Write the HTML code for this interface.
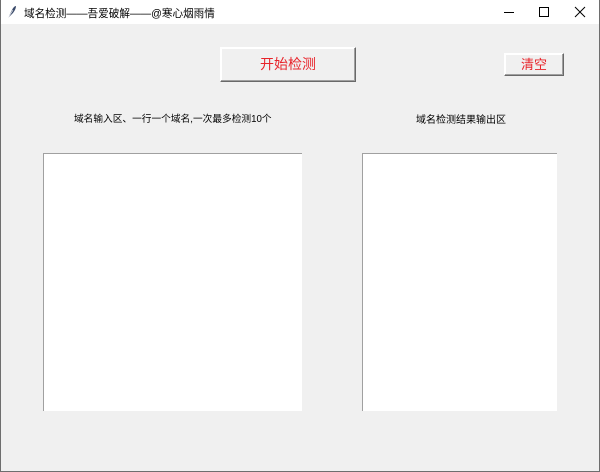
<!DOCTYPE html>
<html><head><meta charset="utf-8"><style>
*{margin:0;padding:0;box-sizing:border-box}
body{width:600px;height:472px;overflow:hidden;background:#f0f0f0;font-family:"Liberation Sans","Noto Sans CJK SC",sans-serif;position:relative}
.win{position:absolute;left:0;top:0;width:600px;height:472px;border:1px solid #6e6e6e;border-top:none}
.title{position:absolute;left:0;top:0;width:600px;height:24px;background:#fff;font-size:10.6px;color:#000}
.title span{position:absolute;left:24px;top:6px}
.btn{position:absolute;background:#f0f0f0;border:1px solid #fff;border-right-color:#696969;border-bottom-color:#696969;box-shadow:inset -1px -1px 0 #a0a0a0, inset 1px 1px 0 #fff;color:#e8232a;text-align:center}
.lbl{position:absolute;font-size:10px;color:#000}
.ta{position:absolute;background:#fff;border-top:1px solid #a0a0a0;border-left:1px solid #a0a0a0}
</style></head><body>
<div class="title">
<svg style="position:absolute;left:7px;top:5px" width="10" height="14" viewBox="0 0 10 14"><path d="M1 13 L5 5 Q7 1 9 1 Q9 4 6 8 Z" fill="#3a4a6a"/><path d="M1 13 L6 5" stroke="#fff" stroke-width="0.6"/></svg>
<span>域名检测——吾爱破解——@寒心烟雨情</span>
<svg style="position:absolute;left:503px;top:6px" width="12" height="12"><line x1="1" y1="6.5" x2="11" y2="6.5" stroke="#000"/></svg>
<svg style="position:absolute;left:538px;top:6px" width="12" height="12"><rect x="1.5" y="1.5" width="9" height="9" fill="none" stroke="#000"/></svg>
<svg style="position:absolute;left:574px;top:6px" width="12" height="12"><path d="M1 1L11 11M11 1L1 11" stroke="#000"/></svg>
</div>
<div class="btn" style="left:220px;top:47px;width:136px;height:35px;font-size:14px;line-height:33px">开始检测</div>
<div class="btn" style="left:504px;top:53px;width:60px;height:23px;font-size:13px;line-height:21px">清空</div>
<div class="lbl" style="left:74px;top:111px;font-size:9.7px">域名输入区、一行一个域名,一次最多检测10个</div>
<div class="lbl" style="left:416px;top:111px">域名检测结果输出区</div>
<div class="ta" style="left:43px;top:153px;width:259px;height:258px"></div>
<div class="ta" style="left:362px;top:153px;width:195px;height:258px"></div>
<div class="win"></div>
</body></html>
